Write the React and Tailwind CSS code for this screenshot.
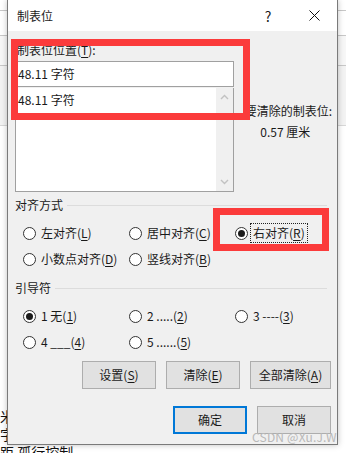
import React from "react";

const U = ({ children }) => (
  <span className="underline underline-offset-[2px] decoration-[1px]">{children}</span>
);

const Radio = ({ checked }) => (
  <span className="w-[13px] h-[13px] rounded-full border border-[#333333] bg-white flex items-center justify-center shrink-0">
    {checked && <span className="w-[7px] h-[7px] rounded-full bg-[#1b1b1b]" />}
  </span>
);

const Option = ({ checked, children, focus }) => (
  <div className="flex items-center h-[20px]">
    <Radio checked={checked} />
    {focus ? (
      <span className="ml-[2px] px-[2px] h-[20px] flex items-center border border-dotted border-[#222]">{children}</span>
    ) : (
      <span className="ml-[5px]">{children}</span>
    )}
  </div>
);

const Btn = ({ w, children, primary }) => (
  <div
    className={
      "h-[28px] flex items-center justify-center bg-[#e1e1e1] " +
      (primary ? "border-2 border-[#0078d7] " : "border border-[#adadad] ") +
      w
    }
  >
    {children}
  </div>
);

const GroupLabel = ({ children }) => (
  <div className="flex items-center h-[16px]">
    <span>{children}</span>
    <div className="flex-1 h-px bg-[#dcdcdc] ml-[4px] mr-[5px]" />
  </div>
);

export default function App() {
  return (
    <div className="relative w-[346px] h-[453px] overflow-hidden bg-[#f3f3f3] text-[12px] leading-[16px] text-[#1a1a1a] font-['Noto_Sans_CJK_SC',sans-serif]">
      {/* document background */}
      <div className="flex flex-col w-[346px] h-[453px]">
        <div className="h-[10px] bg-white shrink-0" />
        <div className="h-[26px] border-y border-[#c8c8c8] bg-white shrink-0" />
        <div className="h-[30px] border-b border-[#c8c8c8] bg-[#f7f7f7] shrink-0" />
        <div className="h-[60px] border-b border-[#d8d8d8] bg-[#f3f3f3] shrink-0" />
        <div className="flex-1 bg-white" />
        <div className="h-[40px] bg-white shrink-0 flex">
          <div className="w-[7px] overflow-hidden text-[14px] leading-[18px] text-[#111] pt-[2px]">
            <div>米</div>
            <div>字</div>
          </div>
        </div>
        <div className="h-[8px] bg-white shrink-0 overflow-hidden">
          <div className="text-[14px] leading-[14px] text-[#111] pl-[0px]">距 孤行控制</div>
        </div>
      </div>

      {/* dialog window */}
      <div className="absolute left-[7px] top-0 w-[331px] h-[445px] flex flex-col bg-[#f0f0f0] border-x border-b border-[#7a7a7a] shadow-[0_0_6px_rgba(0,0,0,0.25)]">
        <div className="h-[31px] bg-white flex items-center shrink-0">
          <span className="pl-[9px] text-[12px]">制表位</span>
          <div className="flex-1" />
          <div className="w-[46px] h-[31px] flex items-center justify-center text-[14px]">?</div>
          <div className="w-[46px] h-[31px] flex items-center justify-center">
            <svg width="11" height="11" viewBox="0 0 11 11">
              <path d="M0.5 0.5 L10.5 10.5 M10.5 0.5 L0.5 10.5" stroke="#111" strokeWidth="1" />
            </svg>
          </div>
        </div>

        <div className="flex flex-col pl-[7px] pr-[5px]">
          <div className="flex mt-[11px]">
            <div className="w-[222px] flex flex-col">
              <div className="h-[16px] pl-[2px]">
                制表位位置(<U>T</U>):
              </div>
              <div className="mt-[3px] h-[26px] bg-white border border-[#a0a0a0] flex items-center pl-[2px]">
                48.11 字符
              </div>
              <div className="mt-[1px] h-[104px] bg-white border border-[#a0a0a0] border-t-0 flex">
                <div className="flex-1 flex flex-col">
                  <div className="h-[24px] flex items-center pl-[2px]">48.11 字符</div>
                </div>
                <div className="w-[17px] bg-[#f0f0f0] flex flex-col items-center justify-between py-[6px]">
                  <svg width="9" height="6" viewBox="0 0 9 6">
                    <path d="M1 5 L4.5 1.5 L8 5" stroke="#c2c2c2" strokeWidth="1.4" fill="none" />
                  </svg>
                  <svg width="9" height="6" viewBox="0 0 9 6">
                    <path d="M1 1 L4.5 4.5 L8 1" stroke="#c2c2c2" strokeWidth="1.4" fill="none" />
                  </svg>
                </div>
              </div>
            </div>
            <div className="flex-1 flex flex-col pl-[11px]">
              <div className="mt-[61px] whitespace-nowrap">要清除的制表位:</div>
              <div className="mt-[5px] text-center pr-[6px]">0.57 厘米</div>
            </div>
          </div>

          <div className="mt-[5px]">
            <GroupLabel>对齐方式</GroupLabel>
          </div>
          <div className="mt-[10px] pl-[8px] grid grid-cols-[106px_106px_106px] gap-y-[6px]">
            <Option>左对齐(<U>L</U>)</Option>
            <Option>居中对齐(<U>C</U>)</Option>
            <Option checked focus>右对齐(<U>R</U>)</Option>
            <Option>小数点对齐(<U>D</U>)</Option>
            <Option>竖线对齐(<U>B</U>)</Option>
          </div>

          <div className="mt-[11px]">
            <GroupLabel>引导符</GroupLabel>
          </div>
          <div className="mt-[10px] pl-[8px] grid grid-cols-[106px_106px_106px] gap-y-[6px]">
            <Option checked>1 无(<U>1</U>)</Option>
            <Option>2 .....(<U>2</U>)</Option>
            <Option>3 ----(<U>3</U>)</Option>
            <Option>4 ___(<U>4</U>)</Option>
            <Option>5 ......(<U>5</U>)</Option>
          </div>

          <div className="mt-[9px] flex justify-end pr-[1px] gap-[10px]">
            <Btn w="w-[74px]">设置(<U>S</U>)</Btn>
            <Btn w="w-[74px]">清除(<U>E</U>)</Btn>
            <Btn w="w-[81px]">全部清除(<U>A</U>)</Btn>
          </div>

          <div className="mt-[17px] flex justify-end pr-[1px] gap-[10px]">
            <Btn w="w-[74px]" primary>确定</Btn>
            <Btn w="w-[74px]">取消</Btn>
          </div>
        </div>
      </div>

      {/* annotation boxes */}
      <div className="absolute left-[11px] top-[39px] w-[239px] h-[81px] border-[7px] border-[#fb3b3b]" />
      <div className="absolute left-[213px] top-[208px] w-[116px] h-[43px] border-[7px] border-[#fb3b3b]" />

      {/* watermark */}
      <div className="absolute left-[252px] top-[429px] text-[12px] leading-[16px] text-[#b8b8b8] tracking-[0.2px]">
        CSDN @Xu.J.W
      </div>
    </div>
  );
}
